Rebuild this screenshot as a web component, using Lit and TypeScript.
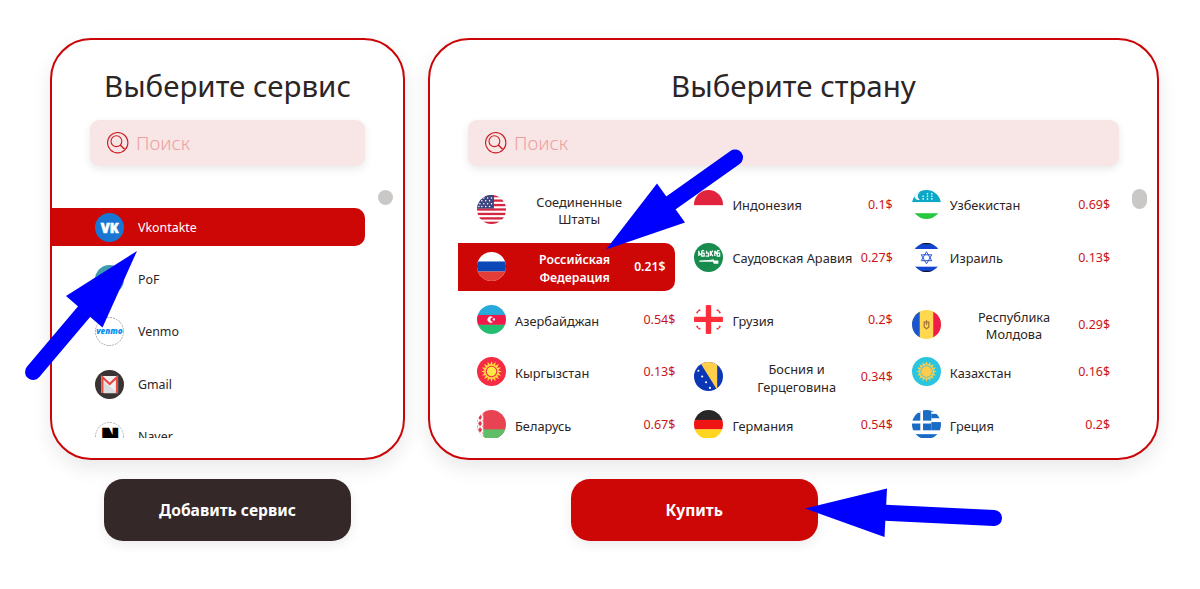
import { LitElement, html, css, svg, nothing } from "lit";
import { customElement, property } from "lit/decorators.js";
import { classMap } from "lit/directives/class-map.js";

interface Service {
  id: string;
  name: string;
  active?: boolean;
}

interface Country {
  code: string;
  lines: string[];
  price: string;
  active?: boolean;
}

const SERVICES: Service[] = [
  { id: "vk", name: "Vkontakte", active: true },
  { id: "pof", name: "PoF" },
  { id: "venmo", name: "Venmo" },
  { id: "gmail", name: "Gmail" },
  { id: "naver", name: "Naver" },
];

const COUNTRIES: Country[] = [
  { code: "us", lines: ["Соединенные", "Штаты"], price: "" },
  { code: "id", lines: ["Индонезия"], price: "0.1$" },
  { code: "uz", lines: ["Узбекистан"], price: "0.69$" },
  { code: "ru", lines: ["Российская", "Федерация"], price: "0.21$", active: true },
  { code: "sa", lines: ["Саудовская Аравия"], price: "0.27$" },
  { code: "il", lines: ["Израиль"], price: "0.13$" },
  { code: "az", lines: ["Азербайджан"], price: "0.54$" },
  { code: "ge", lines: ["Грузия"], price: "0.2$" },
  { code: "md", lines: ["Республика", "Молдова"], price: "0.29$" },
  { code: "kg", lines: ["Кыргызстан"], price: "0.13$" },
  { code: "ba", lines: ["Босния и", "Герцеговина"], price: "0.34$" },
  { code: "kz", lines: ["Казахстан"], price: "0.16$" },
  { code: "by", lines: ["Беларусь"], price: "0.67$" },
  { code: "de", lines: ["Германия"], price: "0.54$" },
  { code: "gr", lines: ["Греция"], price: "0.2$" },
];

// points of a star shaped polygon centered in the 30x30 badge
const sun = (rays: number, outer: number, inner: number) =>
  Array.from({ length: rays * 2 }, (_, i) => {
    const r = i % 2 ? inner : outer;
    const a = (Math.PI * i) / rays;
    return `${(15 + r * Math.sin(a)).toFixed(2)},${(15 - r * Math.cos(a)).toFixed(2)}`;
  }).join(" ");

const band = (y: number, h: number, fill: string) =>
  svg`<rect x="0" y=${y} width="30" height=${h} fill=${fill} />`;

const dots = (points: number[][], r: number, fill: string) =>
  points.map(([x, y]) => svg`<circle cx=${x} cy=${y} r=${r} fill=${fill} />`);

const BADGES: Record<string, unknown> = {
  vk: svg`
    ${band(0, 30, "#1976d2")}
    <text x="6" y="20.4" font-size="14.5" font-weight="900" textLength="18.4"
      lengthAdjust="spacingAndGlyphs" fill="#fff" stroke="#fff" stroke-width=".6">VK</text>`,
  pof: svg`${band(0, 30, "#3f9cae")}<path d="M7 17q8-9 15 0q-8 8-15 0" fill="#fff" />`,
  venmo: svg`
    ${band(0, 30, "#fff")}
    <circle cx="15" cy="15" r="14.6" fill="none" stroke="#777" stroke-width=".8" stroke-dasharray="2 1" />
    <text x="15" y="18" text-anchor="middle" font-size="9.2" font-weight="900" font-style="italic"
      textLength="27.5" lengthAdjust="spacingAndGlyphs" fill="#0e8df0">venmo</text>`,
  gmail: svg`
    ${band(0, 30, "#3a3333")}
    <rect x="6.5" y="6.2" width="17.4" height="17.6" fill="#f1f1f1" />
    <path d="M9 24V12l6 5 9 7z" fill="#dcdcdc" />
    <path d="M7.7 23.8V7.5L15.2 14.6 22.7 7.5V23.8" fill="none" stroke="#e64a45" stroke-width="2.2" />`,
  naver: svg`
    ${band(0, 30, "#fff")}
    <circle cx="15" cy="15" r="14.6" fill="none" stroke="#888" stroke-width=".8" stroke-dasharray="2 1" />
    <text x="7" y="23.6" font-size="23.5" font-weight="900" textLength="17.5"
      lengthAdjust="spacingAndGlyphs" stroke="#000" stroke-width="2.4" fill="#000">N</text>`,
  us: svg`
    ${band(0, 30, "#fff")}
    ${[0, 4.6, 9.2, 13.8, 18.4, 23, 27.6].map((y) => band(y, 2.4, "#d4263f"))}
    <rect width="17.5" height="14" fill="#3c4480" />
    ${dots(
      [[7, 3], [11, 3], [15, 3], [5, 6], [9, 6], [13, 6], [3, 9], [7, 9], [11, 9], [15, 9], [2, 12], [5, 12], [9, 12], [13, 12]],
      0.8,
      "#fff"
    )}`,
  id: svg`${band(0, 30, "#fff")}${band(0, 15.7, "#e2233d")}`,
  uz: svg`
    ${band(0, 30, "#fff")}${band(0, 12.5, "#0ba9c6")}${band(24, 6, "#27c740")}
    <path d="M8 2.6a4 4 0 1 0 0 7.4a4.3 4.3 0 0 1 0-7.4z" fill="#fff" />
    ${dots([[20.5, 4], [16, 4], [11.5, 6.5], [16, 6.5], [20.5, 6.5], [11.5, 9.2], [16, 9.2], [20.5, 9.2]], 0.85, "#fff")}`,
  ru: svg`${band(0, 30, "#fff")}${band(9.8, 10.4, "#0c47b7")}${band(20.2, 10, "#e43d37")}`,
  sa: svg`
    ${band(0, 30, "#178c4d")}
    <path d="M4.500 8.500l2.500 4M5 8v5.500M8 8v5.500h2.500V10.500H8M8 8h2.500M13 8v2.500h2V13.500h-3M17 8v5.500M19.500 8l-2 2.700 2 2.800M21.500 8l2 3.500M21.500 8v5.500M24 8v5.500h2.500V10.500H24M24 8h2.500"
      fill="none" stroke="#fff" stroke-width="1.3" />
    <path d="M5.500 18.700h14.500v-1.700M20 18.700h4.500v2h-3.500z" fill="#fff" stroke="#fff" stroke-width="1.400" />`,
  il: svg`
    ${band(0, 30, "#fff")}${band(0, 6.2, "#1344d1")}${band(0, 1.2, "#111")}
    ${band(24.5, 6, "#1344d1")}${band(28.8, 1.2, "#111")}
    <path d="M15 9l5.400 9.300H9.600zM15 21.500l5.400-9.300H9.600z" fill="none" stroke="#2850d2" stroke-width="1" />`,
  az: svg`
    ${band(0, 10.5, "#28a9db")}${band(10.3, 10.3, "#f0194a")}${band(20.5, 10, "#23be72")}
    <path d="M16 12.600a3.100 3.100 0 1 0 0 5a2.500 2.500 0 1 1 0-5z" fill="#fff" stroke="#fff" stroke-width=".5" />
    ${dots([[17.5, 15]], 1.2, "#fff")}`,
  ge: svg`
    ${band(0, 30, "#fff")}${band(12.2, 5.4, "#fb2e3a")}
    <rect x="12.2" width="5.6" height="30" fill="#fb2e3a" />
    <path d="M3 8.500l1-2.500 3-1M27 8.500l-1-2.500-3-1M3 21.500l1 2.500 3 1M27 21.500l-1 2.500-3 1"
      fill="none" stroke="#fb2e3a" stroke-width="1.8" stroke-dasharray="2.400 .6" />`,
  md: svg`
    ${band(0, 30, "#ffd850")}
    <rect width="8" height="30" fill="#1a57cf" /><rect x="22" width="8" height="30" fill="#ef1d49" />
    <path d="M12.600 12.500v5l2.400 1.800 2.400-1.800v-5zM15 10.500v5" fill="none" stroke="#a4733b" stroke-width="1.3" />`,
  kg: svg`
    ${band(0, 30, "#f62c45")}
    <polygon points=${sun(16, 10.8, 7)} fill="#ffda3d" />
    <circle cx="15" cy="15" r="6" fill="#f62c45" /><circle cx="15" cy="15" r="4.900" fill="#ffea45" />`,
  ba: svg`
    ${band(0, 30, "#0b36b6")}
    <path d="M6 0H24V29z" fill="#ffcf4a" />
    ${dots([[4.5, 9], [8.5, 15], [12.5, 21], [16.5, 26.8]], 1.1, "#fff")}`,
  kz: svg`
    ${band(0, 30, "#2cc5df")}
    <polygon points=${sun(16, 10.5, 7.2)} fill="#ffcf4b" />
    <circle cx="15" cy="15" r="6.400" fill="#2cc5df" /><circle cx="15" cy="15" r="5.600" fill="#ffcb4c" />`,
  by: svg`
    ${band(0, 30, "#e74353")}${band(20, 10, "#5ebd66")}
    <rect width="6.5" height="30" fill="#fff" />
    <path d="M3.200 5l1.700 2.500-1.700 2.500-1.700-2.500zM3.200 11.500l1.700 2.500-1.700 2.500-1.700-2.500zM3.200 18l1.700 2.500-1.700 2.500-1.700-2.500zM6 4v2M6 10v2M6 16v2M6 23v2M.6 10v2M.6 16v2"
      fill="#e23345" stroke="#e23345" stroke-width=".6" />`,
  de: svg`${band(0, 10.4, "#272727")}${band(10.2, 10, "#f01515")}${band(20, 10, "#ffd520")}`,
  gr: svg`
    ${band(0, 30, "#fff")}
    <rect width="8.600" height="11" fill="#1a6bc4" /><rect x="11.400" width="8.600" height="11" fill="#1a6bc4" />
    <rect y="14" width="8.600" height="7" fill="#1a6bc4" /><rect x="11.400" y="14" width="8.600" height="7" fill="#1a6bc4" />
    <rect x="5.500" width="3" height="3" fill="#fff" />
    <rect x="20" y="4" width="10" height="4.500" fill="#1a6bc4" /><rect x="20" y="12.500" width="10" height="8.500" fill="#1a6bc4" />
    <rect x="20" y="0" width="10" height="2" fill="#1a6bc4" />
    ${band(25, 5, "#1a6bc4")}`,
};

@customElement("round-badge")
export class RoundBadge extends LitElement {
  @property() name = "";

  static styles = css`
    :host {
      display: block;
      flex: none;
      width: 29px;
      height: 29px;
      border-radius: 50%;
      overflow: hidden;
    }
    svg {
      display: block;
      width: 100%;
      height: 100%;
      font-family: "Noto Sans", sans-serif;
    }
  `;

  render() {
    return html`<svg viewBox="0 0 30 30">${BADGES[this.name] ?? nothing}</svg>`;
  }
}

@customElement("search-field")
export class SearchField extends LitElement {
  static styles = css`
    :host {
      display: flex;
      align-items: center;
      gap: 7px;
      box-sizing: border-box;
      height: 46px;
      padding: 0 17px;
      border-radius: 9px;
      background: #f8e5e5;
      box-shadow: 0 3px 8px rgba(0, 0, 0, 0.09);
      color: #eda0a2;
      font: 300 18.8px/46px "Noto Sans", sans-serif;
    }
    svg {
      flex: none;
      width: 22px;
      height: 22px;
      fill: none;
      stroke: #cd1d24;
      stroke-width: 1.1;
    }
  `;

  render() {
    return html`
      <svg viewBox="0 0 22 22">
        <circle cx="10.7" cy="10.7" r="10.2" />
        <circle cx="9.4" cy="9.2" r="5.4" />
        <path d="M13.2 13l4.400 4.300" stroke-width="1.5" />
      </svg>
      <span>Поиск</span>
    `;
  }
}

@customElement("app-root")
export class AppRoot extends LitElement {
  static styles = css`
    :host {
      display: block;
      position: relative;
      box-sizing: border-box;
      width: 1200px;
      height: 589px;
      padding: 38px 41px 0 50px;
      overflow: hidden;
      background: #fff;
      color: #2c2525;
      font-family: "Noto Sans", sans-serif;
      font-size: 12.8px;
    }
    .page {
      display: flex;
      gap: 23px;
    }
    .column {
      display: flex;
      flex-direction: column;
      gap: 18.5px;
    }
    .services {
      width: 355px;
    }
    .countries {
      width: 731px;
    }
    .card {
      display: flex;
      flex-direction: column;
      box-sizing: border-box;
      height: 422px;
      padding: 23px 38px 20px;
      border: 2px solid #cb0507;
      border-radius: 41px;
      background: #fff;
      box-shadow: 0 8px 20px rgba(0, 0, 0, 0.09);
    }
    h2 {
      margin: 0 0 12px;
      height: 45px;
      font-size: 29.5px;
      font-weight: 400;
      line-height: 45px;
      text-align: center;
      white-space: nowrap;
    }
    .body {
      display: flex;
      flex: 1;
      min-height: 0;
    }
    .services .body {
      margin: 24px -28px 0 -38px;
      gap: 13px;
    }
    .countries .body {
      margin: 19px -28px 0 -10px;
      gap: 22px;
    }
    .thumb {
      flex: none;
      width: 15.5px;
      height: 20px;
      margin-top: 4px;
      border-radius: 8px;
      background: #c9c8c7;
    }
    .services .thumb {
      height: 15px;
      margin-top: 0;
    }
    .service-list {
      display: flex;
      flex: 1;
      flex-direction: column;
      gap: 14px;
      padding-top: 18px;
      overflow: hidden;
      font-size: 12.4px;
    }
    .service {
      display: flex;
      flex: none;
      align-items: center;
      gap: 14px;
      height: 38.3px;
      padding-left: 43px;
      border-radius: 0 10px 10px 0;
    }
    .country-list {
      display: grid;
      flex: 1;
      grid-template-columns: repeat(3, 217.4px);
      grid-template-rows: 53px 62.2px 52.4px 52.5px 38.4px;
      align-items: start;
      overflow: hidden;
    }
    .country {
      display: flex;
      align-items: center;
      gap: 9px;
      height: 38.4px;
      padding-left: 19px;
    }
    .country .name {
      flex: 1;
      padding-top: 4px;
      line-height: 17.5px;
      white-space: nowrap;
    }
    .country.tall {
      height: 48px;
    }
    .tall .name {
      padding-top: 4.5px;
      text-align: center;
    }
    .price {
      margin-left: -9px;
      color: #cc1417;
      font-size: 12.5px;
      text-align: right;
    }
    .price:empty {
      min-width: 32px;
    }
    .active {
      background: #cd0606;
      color: #fff;
    }
    .country.active {
      margin-top: 4.6px;
      padding-right: 10px;
      border-radius: 0 10px 10px 0;
      font-size: 12.3px;
      font-weight: 600;
    }
    .active .price {
      color: #fff;
      font-size: 12.2px;
    }
    button {
      align-self: center;
      width: 247.5px;
      height: 62px;
      padding: 0;
      border: 0;
      border-radius: 19px;
      background: #352828;
      box-shadow: 0 4px 12px rgba(0, 0, 0, 0.08);
      color: #fff;
      font: 700 15.6px "Noto Sans", sans-serif;
    }
    .countries button {
      align-self: flex-start;
      margin-left: 142.5px;
      background: #cd0606;
    }
    .arrows {
      position: absolute;
      inset: 0;
      width: 1200px;
      height: 589px;
      fill: #00f;
      stroke: #00f;
      pointer-events: none;
    }
    .arrows line {
      stroke-width: 16;
      stroke-linecap: round;
    }
    .arrows polygon {
      stroke: none;
    }
  `;

  private renderService(service: Service) {
    return html`
      <div class=${classMap({ service: true, active: !!service.active })}>
        <round-badge name=${service.id}></round-badge>
        <span>${service.name}</span>
      </div>
    `;
  }

  private renderCountry(country: Country) {
    const classes = {
      country: true,
      tall: country.lines.length > 1,
      active: !!country.active,
    };
    return html`
      <div class=${classMap(classes)}>
        <round-badge name=${country.code}></round-badge>
        <span class="name">${country.lines.map((line, i) => (i ? html`<br />${line}` : line))}</span>
        <span class="price">${country.price || nothing}</span>
      </div>
    `;
  }

  render() {
    return html`
      <div class="page">
        <section class="column services">
          <div class="card">
            <h2>Выберите сервис</h2>
            <search-field></search-field>
            <div class="body">
              <div class="service-list">${SERVICES.map((s) => this.renderService(s))}</div>
              <div class="thumb"></div>
            </div>
          </div>
          <button>Добавить сервис</button>
        </section>
        <section class="column countries">
          <div class="card">
            <h2>Выберите страну</h2>
            <search-field></search-field>
            <div class="body">
              <div class="country-list">${COUNTRIES.map((c) => this.renderCountry(c))}</div>
              <div class="thumb"></div>
            </div>
          </div>
          <button>Купить</button>
        </section>
      </div>
      <svg class="arrows" viewBox="0 0 1200 589">
        <line x1="33" y1="372" x2="88" y2="307" />
        <polygon points="137,251 66,296 102.5,327.5" />
        <line x1="735" y1="157.5" x2="668" y2="205" />
        <polygon points="606,249.5 657,183.5 685,222.5" />
        <line x1="994" y1="518" x2="880" y2="512.5" />
        <polygon points="805,508.5 887,488.5 884.5,537" />
      </svg>
    `;
  }
}
